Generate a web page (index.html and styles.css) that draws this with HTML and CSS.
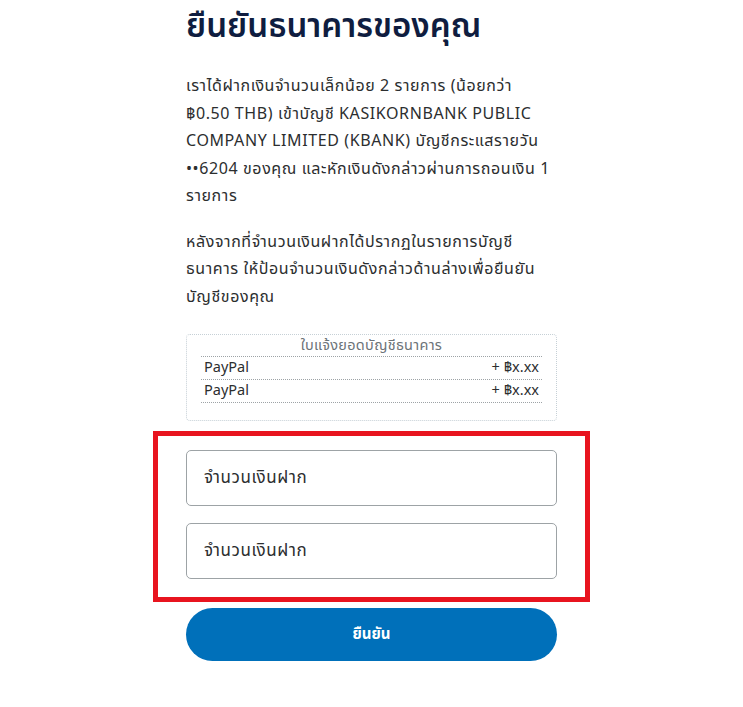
FILE: index.html
```html
<!DOCTYPE html>
<html lang="th">
  <head>
    <meta charset="UTF-8" />
    <title>ยืนยันธนาคารของคุณ</title>
    <link rel="stylesheet" href="styles.css">
  </head>
  <body>
    <div id="confirmBank">
      <h1>ยืนยันธนาคารของคุณ</h1>

      <p class="intro">
        เราได้ฝากเงินจำนวนเล็กน้อย 2 รายการ (น้อยกว่า <span class="nowrap">฿0.50 THB)</span> เข้าบัญชี
        KASIKORNBANK PUBLIC COMPANY LIMITED (KBANK) บัญชีกระแสรายวัน ••6204
        ของคุณ และหักเงินดังกล่าวผ่านการถอนเงิน 1 รายการ
      </p>

      <p class="intro">
        หลังจากที่จำนวนเงินฝากได้ปรากฏในรายการบัญชีธนาคาร
        ให้ป้อนจำนวนเงินดังกล่าวด้านล่างเพื่อยืนยันบัญชีของคุณ
      </p>

      <div class="statement">
        <div class="statement-title">ใบแจ้งยอดบัญชีธนาคาร</div>
        <div class="statement-row">
          <span>PayPal</span>
          <span>+ ฿x.xx</span>
        </div>
        <div class="statement-row">
          <span>PayPal</span>
          <span>+ ฿x.xx</span>
        </div>
      </div>

      <div class="highlight">
        <input type="text" class="amount" placeholder="จำนวนเงินฝาก" />
        <input type="text" class="amount" placeholder="จำนวนเงินฝาก" />
      </div>

      <button class="confirm-btn">ยืนยัน</button>
    </div>
  </body>
</html>
```

FILE: styles.css
```css
body {
  margin: 0;
  background: #fff;
  font-family: "Noto Sans Thai", Tahoma, "Noto Sans", "DejaVu Sans", sans-serif;
  color: #2c2e2f;
}

#confirmBank {
  width: 371px;
  margin: 0 auto;
}

h1 {
  margin: 0;
  padding-top: 5px;
  font-size: 33px;
  font-weight: 600;
  line-height: 44px;
  color: #0f1d40;
}

.intro {
  margin: 24px 0 0;
  font-size: 16px;
  line-height: 27.5px;
  letter-spacing: 0.6px;
}

.intro + .intro {
  margin-top: 18px;
}

.nowrap {
  white-space: nowrap;
}

.statement {
  margin-top: 23px;
  padding: 1px 14px 17px;
  border: 1px dotted #c6d0d6;
  border-radius: 4px;
  font-size: 14.5px;
}

.statement-title {
  text-align: center;
  color: #6c7378;
  line-height: 20px;
  letter-spacing: 0.3px;
  border-bottom: 1px dotted #9da3a6;
}

.statement-row {
  display: flex;
  justify-content: space-between;
  padding: 0 3px;
  line-height: 22px;
  border-bottom: 1px dotted #9da3a6;
}

.highlight {
  margin: 10px -33px 0;
  padding: 14px 28px 18px;
  border: 5px solid #e8141f;
  display: flex;
  flex-direction: column;
  gap: 17px;
}

.amount {
  height: 56px;
  box-sizing: border-box;
  padding: 0 17px;
  border: 1px solid #9da3a6;
  border-radius: 5px;
  font-family: inherit;
  font-size: 17px;
  letter-spacing: 0.6px;
  color: #2c2e2f;
}

.amount::placeholder {
  color: #2c2e2f;
}

.confirm-btn {
  display: block;
  width: 100%;
  height: 53px;
  margin-top: 6px;
  border: none;
  border-radius: 27px;
  background: #0070ba;
  color: #fff;
  font-family: inherit;
  font-size: 15px;
  font-weight: bold;
  cursor: pointer;
}
```
